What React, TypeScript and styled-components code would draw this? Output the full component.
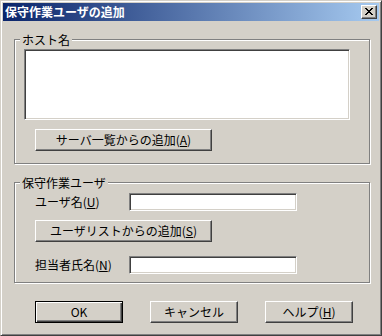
import React from 'react'
import styled, { createGlobalStyle } from 'styled-components'

const FACE = '#D4D0C8'
const SHADOW = '#808080'
const DARK = '#404040'

const GlobalStyle = createGlobalStyle`
    html, body {
        margin: 0;
        padding: 0;
        background: ${FACE};
    }
    body {
        font-family: "Noto Sans CJK JP", "Liberation Sans", sans-serif;
        font-size: 12px;
        color: #000000;
    }
`

const Window = styled.div`
    box-sizing: border-box;
    width: 382px; height: 336px;
    display: flex;
    flex-direction: column;
    padding: 2px;
    background: ${FACE};
    border: 1px solid;
    border-color: ${FACE} ${DARK} ${DARK} ${FACE};
    box-shadow: inset 1px 1px #FFFFFF, inset -1px -1px ${SHADOW};
`

const TitleBar = styled.div`
    display: flex;
    align-items: center;
    justify-content: space-between;
    height: 18px;
    padding: 0 2px 0 2px;
    background: linear-gradient(to right, #0A246A, #A6CAF0);
`

const Title = styled.span`
    color: #FFFFFF;
    font-weight: bold;
    font-size: 12px;
    line-height: 18px;
    letter-spacing: 0;
`

const CloseButton = styled.div`
    box-sizing: border-box;
    display: flex;
    align-items: center;
    justify-content: center;
    width: 16px; height: 14px;
    background: ${FACE};
    border: 1px solid;
    border-color: #FFFFFF ${DARK} ${DARK} #FFFFFF;
    box-shadow: inset -1px -1px ${SHADOW};
    svg {
        margin: 0 1px 1px 0;
    }
`

const Body = styled.div`
    display: flex;
    flex-direction: column;
    padding: 11px 0 0 11px;
`

const Group = styled.fieldset<{ $gap: number }>`
    box-sizing: border-box;
    width: 356px;
    min-width: 0;
    margin: ${p => p.$gap}px 0 0 0;
    padding: 0 0 ${p => p.$pb}px 0;
    border: 1px solid ${SHADOW};
    box-shadow: inset 1px 1px #FFFFFF, 1px 1px 0 #FFFFFF;
    display: flex;
    flex-direction: column;
    align-items: flex-start;
` as any

const Legend = styled.legend`
    margin-left: 5px;
    padding: 0 2px;
    height: 15px;
    line-height: 15px;
    background: ${FACE};
`

const ListBox = styled.div`
    box-sizing: border-box;
    width: 326px; height: 71px;
    margin: 2px 0 0 9px;
    background: #FFFFFF;
    border: 1px solid;
    border-color: ${SHADOW} #FFFFFF #FFFFFF ${SHADOW};
    box-shadow: inset 1px 1px ${DARK}, inset -1px -1px ${FACE};
`

const Button = styled.button<{ $w: number; $default?: boolean }>`
    box-sizing: border-box;
    width: ${p => p.$w}px; height: 22px;
    padding: 0;
    font-family: inherit;
    font-size: 12px;
    line-height: 14px;
    color: #000000;
    background: ${FACE};
    border: 1px solid;
    border-color: ${p => p.$default ? '#000000' : `#FFFFFF ${DARK} ${DARK} #FFFFFF`};
    box-shadow: ${p => p.$default
        ? `inset 1px 1px #FFFFFF, inset -1px -1px ${DARK}, inset -2px -2px ${SHADOW}`
        : `inset -1px -1px ${SHADOW}`};
    outline: none;
` as any

const GroupButton = styled(Button)<{ $top: number }>`
    margin: ${p => p.$top}px 0 0 20px;
` as any

const FieldRow = styled.div<{ $top: number }>`
    display: flex;
    align-items: center;
    margin: ${p => p.$top}px 0 0 20px;
`

const FieldLabel = styled.label`
    width: 94px;
    line-height: 14px;
`

const TextBox = styled.input`
    box-sizing: border-box;
    width: 168px; height: 18px;
    margin: 0;
    padding: 0 2px;
    background: #FFFFFF;
    border: 1px solid;
    border-color: ${SHADOW} #FFFFFF #FFFFFF ${SHADOW};
    box-shadow: inset 1px 1px ${DARK}, inset -1px -1px ${FACE};
    outline: none;
`

const Footer = styled.div`
    display: flex;
    gap: 27px;
    margin: 18px 0 0 21px;
`

const CloseIcon = () => (
    <svg width="8" height="7" viewBox="0 0 8 7" shapeRendering="crispEdges">
        <path fill="#000000" d="M0 0h2v1h-2zM6 0h2v1h-2zM1 1h2v1h-2zM5 1h2v1h-2zM2 2h4v1h-4zM3 3h2v1h-2zM2 4h4v1h-4zM1 5h2v1h-2zM5 5h2v1h-2zM0 6h2v1h-2zM6 6h2v1h-2z" />
    </svg>
)

const App: React.FC = () => {
    return (
        <>
            <GlobalStyle />
            <Window>
                <TitleBar>
                    <Title>保守作業ユーザの追加</Title>
                    <CloseButton><CloseIcon /></CloseButton>
                </TitleBar>
                <Body>
                    <Group $gap={0} $pb={12}>
                        <Legend>ホスト名</Legend>
                        <ListBox />
                        <GroupButton $w={177} $top={9}>サーバ一覧からの追加(<u>A</u>)</GroupButton>
                    </Group>
                    <Group $gap={11} $pb={8}>
                        <Legend>保守作業ユーザ</Legend>
                        <FieldRow $top={3}>
                            <FieldLabel>ユーザ名(<u>U</u>)</FieldLabel>
                            <TextBox type='text' />
                        </FieldRow>
                        <GroupButton $w={177} $top={9}>ユーザリストからの追加(<u>S</u>)</GroupButton>
                        <FieldRow $top={14}>
                            <FieldLabel>担当者氏名(<u>N</u>)</FieldLabel>
                            <TextBox type='text' />
                        </FieldRow>
                    </Group>
                    <Footer>
                        <Button $w={88} $default>OK</Button>
                        <Button $w={88}>キャンセル</Button>
                        <Button $w={88}>ヘルプ(<u>H</u>)</Button>
                    </Footer>
                </Body>
            </Window>
        </>
    )
}

export default App
